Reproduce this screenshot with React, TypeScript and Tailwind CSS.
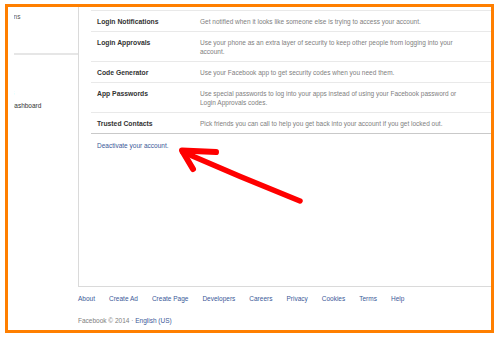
import React from 'react';

const rows = [
    { label: 'Login Notifications', lines: ['Get notified when it looks like someone else is trying to access your account.'] },
    { label: 'Login Approvals', lines: ['Use your phone as an extra layer of security to keep other people from logging into your', 'account.'] },
    { label: 'Code Generator', lines: ['Use your Facebook app to get security codes when you need them.'] },
    { label: 'App Passwords', lines: ['Use special passwords to log into your apps instead of using your Facebook password or', 'Login Approvals codes.'] },
    { label: 'Trusted Contacts', lines: ['Pick friends you can call to help you get back into your account if you get locked out.'] },
];

const footerLinks = ['About', 'Create Ad', 'Create Page', 'Developers', 'Careers', 'Privacy', 'Cookies', 'Terms', 'Help'];

function RedArrow() {
    // hand drawn marker arrow, soft edges
    return (
        <svg className="absolute left-0 top-0 pointer-events-none" width="499" height="338" viewBox="0 0 499 338">
            <defs>
                <filter id="soft" x="-10%" y="-10%" width="120%" height="120%">
                    <feGaussianBlur stdDeviation="0.7" />
                </filter>
            </defs>
            <g filter="url(#soft)" stroke="#ff0000" fill="none" strokeLinecap="round" strokeLinejoin="round">
                <path d="M216 152 L182 150.5 L193 169" strokeWidth="6" />
                <path d="M183 152 Q240 177 300 201" strokeWidth="5.5" />
            </g>
        </svg>
    );
}

export default function App() {
    return (
        <div className="relative w-[499px] h-[338px] bg-white overflow-hidden font-['Liberation_Sans',Arial,sans-serif]">
            <div className="absolute left-[5px] top-[4px] w-[489px] h-[329px] border-[3px] border-[#ff7f00] overflow-hidden bg-white">
                <div className="flex">
                    {/* left nav, cropped on its left side */}
                    <div className="w-[70px] shrink-0 pl-[6px]">
                        <div className="overflow-hidden flex flex-col text-[6.5px] leading-[13px] text-[#555] whitespace-nowrap">
                            <div className="pt-[2.5px] ml-[-29px]">Notifications</div>
                            <div className="mt-[30.5px] h-[2px] bg-[#e6e6e6]" />
                            <div className="mt-[4.5px] ml-[-29px] text-[#333]">
                                <div>Apps</div>
                                <div>Ads</div>
                                <div>Payments</div>
                                <div>Support Dashboard</div>
                                <div>Videos</div>
                            </div>
                        </div>
                    </div>

                    {/* main settings column */}
                    <div className="w-[440px] shrink-0">
                        <div className="h-[280px] border-l border-b border-[#dadada] pl-[12px] pt-[3px]">
                            <div className="w-[420px] border-b border-[#c9c9c9]">
                                {rows.map(r => (
                                    <div key={r.label} className="grid grid-cols-[109px_1fr] border-t border-[#e9e9e9] pt-[6px] pb-[5px] text-[6.5px] leading-[9px]">
                                        <div className="pl-[6px] font-bold text-[#333] text-[6.8px] whitespace-nowrap">{r.label}</div>
                                        <div className="text-[#808080] whitespace-nowrap">
                                            {r.lines.map(l => <div key={l}>{l}</div>)}
                                        </div>
                                    </div>
                                ))}
                            </div>
                            <div className="mt-[7px] pl-[6px] text-[6.5px] leading-[9px] text-[#3b5998]">Deactivate your account.</div>
                        </div>

                        <div className="mt-[6.5px] flex gap-[14px] text-[6.5px] leading-[9px] text-[#3b5998] whitespace-nowrap">
                            {footerLinks.map(f => <span key={f}>{f}</span>)}
                        </div>
                        <div className="mt-[13px] text-[6.5px] leading-[9px] text-[#808080] whitespace-nowrap">
                            Facebook © 2014 · <span className="text-[#3b5998]">English (US)</span>
                        </div>
                    </div>
                </div>
            </div>
            <RedArrow />
        </div>
    );
}
